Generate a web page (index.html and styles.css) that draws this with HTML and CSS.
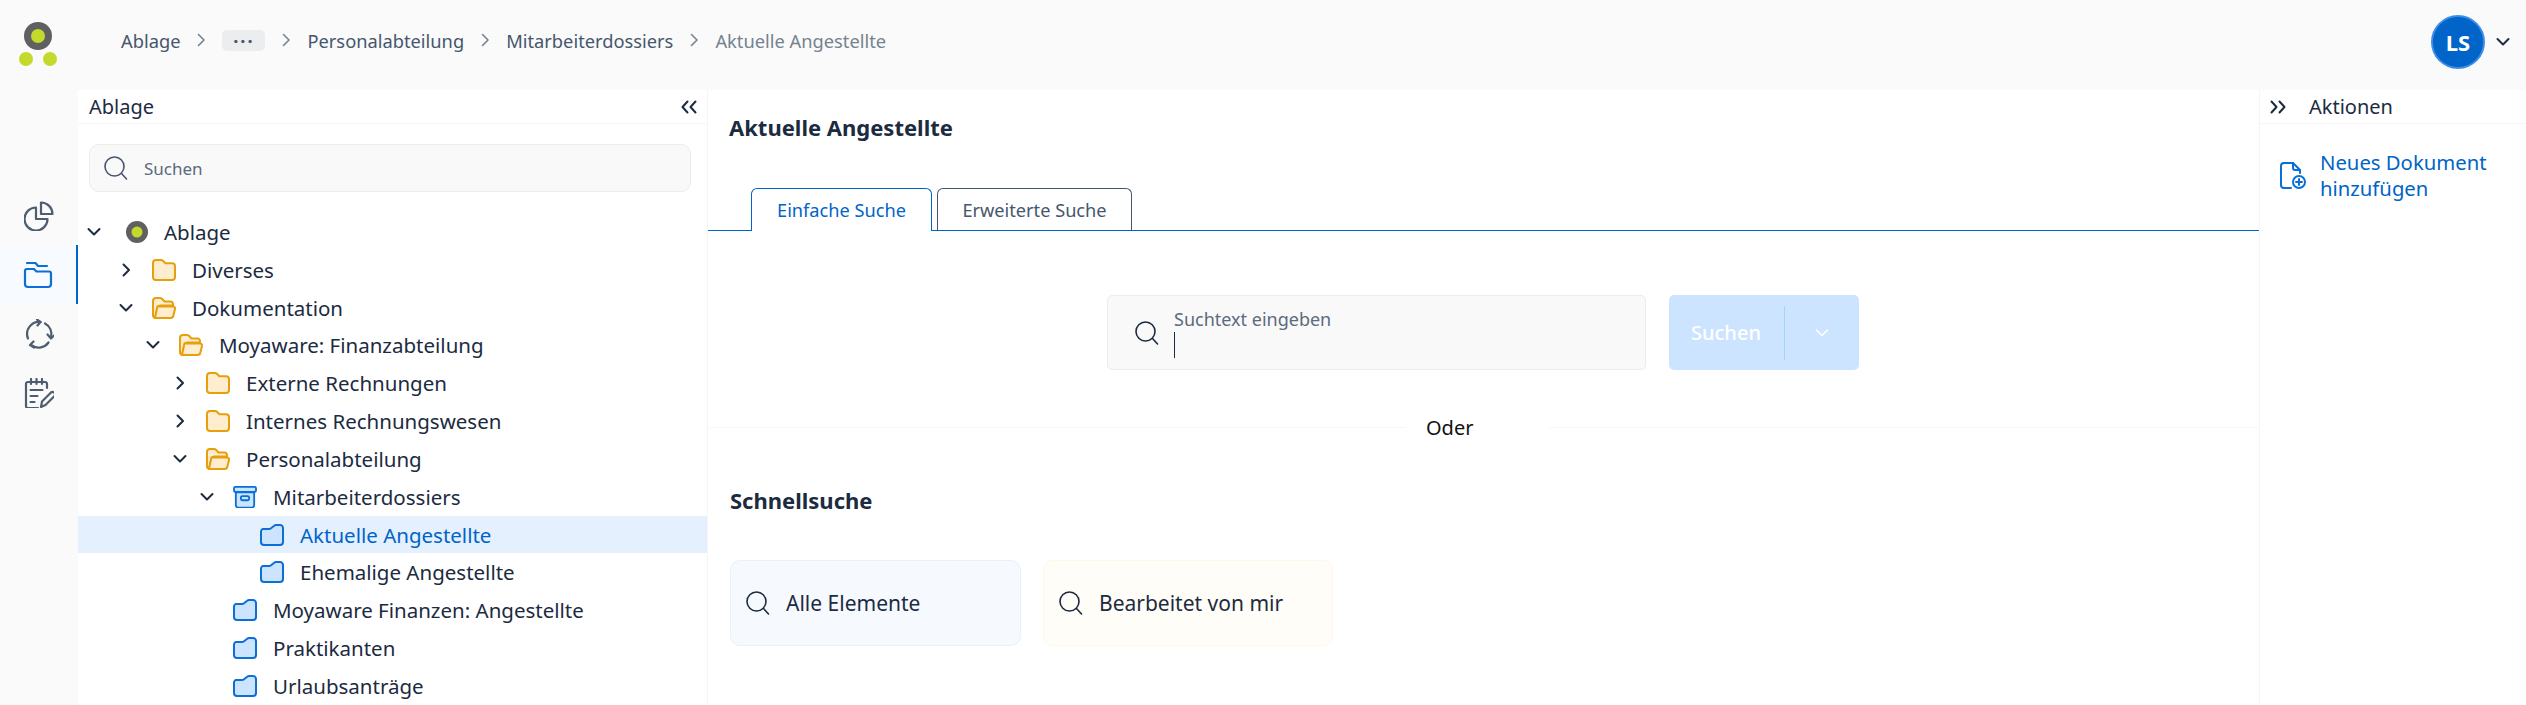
FILE: index.html
```html
<!DOCTYPE html>
<html lang="de">
<head>
<meta charset="utf-8">
<title>Aktuelle Angestellte</title>
<link rel="stylesheet" href="styles.css">
</head>
<body>
<svg class="defs" width="0" height="0" aria-hidden="true">
  <symbol id="search" viewBox="0 0 24 24"><circle cx="10.5" cy="10.5" r="9.5"/><path d="M17.5 17.5 22.5 23"/></symbol>
  <symbol id="chev-r" viewBox="0 0 16 16"><path d="M5.5 2.5 11 8l-5.500 5.500"/></symbol>
  <symbol id="chev-d" viewBox="0 0 16 16"><path d="M2.500 5 8 10.500 13.500 5"/></symbol>
  <symbol id="folder" viewBox="0 0 24 22"><path d="M1 4a3 3 0 0 1 3-3h5c1 0 1.600.4 2.200 1l2 2.200h6.800a3 3 0 0 1 3 3V18a3 3 0 0 1-3 3H4a3 3 0 0 1-3-3z"/></symbol>
  <symbol id="folder-open" viewBox="0 0 24 22"><path d="M1 4a3 3 0 0 1 3-3h4c1 0 1.600.4 2.200 1l2.300 2.500h6a2.500 2.500 0 0 1 2.500 2.500v1.500H8c-1.300 0-2.200.7-2.600 2L3 21H3.500A2.500 2.500 0 0 1 1 18.500z"/><path d="M5.400 9.500h15.600c1.500 0 2.400 1.200 2 2.600l-1.600 6.400A3 3 0 0 1 18.500 21H3z"/></symbol>
  <symbol id="folder-blue" viewBox="0 0 24 22"><path d="M1 7.500c0-1 .4-1.700 1.200-2.300L3 5h6c.8 0 1.400-.3 2-.8l3.200-2.500c.5-.4 1-.7 1.700-.7H20a3 3 0 0 1 3 3v14a3 3 0 0 1-3 3H4a3 3 0 0 1-3-3z"/></symbol>
  <symbol id="archive" viewBox="0 0 26 24"><path d="M3 7h20v14a2.500 2.500 0 0 1-2.500 2.500h-15A2.500 2.500 0 0 1 3 21z"/><rect x="1" y="1" width="24" height="5.500" rx="1.500"/><rect x="8.500" y="11" width="9" height="4.500" rx="1.500"/></symbol>
</svg>

<header class="topbar">
  <svg class="logo" width="60" height="70" viewBox="0 0 60 70" role="img" aria-label="Logo">
    <circle cx="30" cy="29" r="14" fill="#606062"/>
    <circle cx="30" cy="29" r="7" fill="#c3d92b"/>
    <circle cx="18" cy="52" r="7" fill="#c3d92b"/>
    <circle cx="42" cy="52" r="7" fill="#c3d92b"/>
  </svg>
  <nav class="crumbs">
    <a class="crumb">Ablage</a>
    <svg class="sep"><use href="#chev-r"/></svg>
    <span class="more">···</span>
    <svg class="sep"><use href="#chev-r"/></svg>
    <a class="crumb">Personalabteilung</a>
    <svg class="sep"><use href="#chev-r"/></svg>
    <a class="crumb">Mitarbeiterdossiers</a>
    <svg class="sep"><use href="#chev-r"/></svg>
    <span class="crumb current">Aktuelle Angestellte</span>
  </nav>
  <div class="user">
    <span class="avatar">LS</span>
    <svg class="user-chev"><use href="#chev-d"/></svg>
  </div>
</header>

<div class="body">
  <aside class="rail">
    <a class="rail-item">
      <svg width="30" height="30" viewBox="0 0 30 30"><path d="M12 6.500a11.500 11.500 0 1 0 11.500 11.500H12z"/><path d="M17 1.500a11.500 11.500 0 0 1 11.500 11.500H17z"/></svg>
    </a>
    <a class="rail-item active">
      <svg width="30" height="30" viewBox="0 0 30 30"><path d="M4 3h8.500l2.500 3h9"/><path d="M2 11a2 2 0 0 1 2-2h7l2.500 2.500h12.500a2 2 0 0 1 2 2V24a3 3 0 0 1-3 3H5a3 3 0 0 1-3-3z"/></svg>
    </a>
    <a class="rail-item">
      <svg width="30" height="30" viewBox="0 0 30 30"><path d="M4 19.500A12 12 0 0 1 16.500 3"/><path d="M13 .5l3.500 2.500-3 3.500"/><path d="M21 4.500a12 12 0 0 1 6 14"/><path d="M23.500 15.500l3.500 4 3-3"/><path d="M24.500 23.500A12 12 0 0 1 8 26.500"/><path d="M9.500 22.500 6 26l4 2.500"/></svg>
    </a>
    <a class="rail-item">
      <svg width="30" height="30" viewBox="0 0 30 30"><path d="M23 10V6a2 2 0 0 0-2-2H4a2 2 0 0 0-2 2v22a2 2 0 0 0 2 2h10"/><path d="M7 1v5M12.500 1v5M18 1v5M6.500 12h12M6.500 18h7M6.500 24h4"/><path d="M17 29l1-5.500 9-9a2.500 2.500 0 0 1 3.500 3.500l-9 9z"/></svg>
    </a>
  </aside>

  <section class="tree-panel">
    <div class="panel-head tree-head">
      <span>Ablage</span>
      <svg class="collapse" width="18" height="14" viewBox="0 0 18 14"><path d="M7.500 1.500 2.500 7l5 5.500M15.500 1.500l-5 5.500 5 5.500"/></svg>
    </div>
    <label class="tree-search">
      <svg class="ico-search gray"><use href="#search"/></svg>
      <span>Suchen</span>
    </label>
    <ul class="tree">
      <li class="row root"><svg class="chev"><use href="#chev-d"/></svg>
        <svg class="root-ico" width="22" height="22" viewBox="0 0 22 22"><circle cx="11" cy="11" r="11" fill="#606062"/><circle cx="11" cy="11" r="5.500" fill="#c3d92b"/></svg>
        <span>Ablage</span></li>
      <li class="row l1"><svg class="chev"><use href="#chev-r"/></svg><svg class="ico orange"><use href="#folder"/></svg><span>Diverses</span></li>
      <li class="row l1"><svg class="chev"><use href="#chev-d"/></svg><svg class="ico orange"><use href="#folder-open"/></svg><span>Dokumentation</span></li>
      <li class="row l2"><svg class="chev"><use href="#chev-d"/></svg><svg class="ico orange"><use href="#folder-open"/></svg><span>Moyaware: Finanzabteilung</span></li>
      <li class="row l3"><svg class="chev"><use href="#chev-r"/></svg><svg class="ico orange"><use href="#folder"/></svg><span>Externe Rechnungen</span></li>
      <li class="row l3"><svg class="chev"><use href="#chev-r"/></svg><svg class="ico orange"><use href="#folder"/></svg><span>Internes Rechnungswesen</span></li>
      <li class="row l3"><svg class="chev"><use href="#chev-d"/></svg><svg class="ico orange"><use href="#folder-open"/></svg><span>Personalabteilung</span></li>
      <li class="row l4"><svg class="chev"><use href="#chev-d"/></svg><svg class="ico blue"><use href="#archive"/></svg><span>Mitarbeiterdossiers</span></li>
      <li class="row l5 selected"><span class="chev"></span><svg class="ico blue"><use href="#folder-blue"/></svg><span>Aktuelle Angestellte</span></li>
      <li class="row l5"><span class="chev"></span><svg class="ico blue"><use href="#folder-blue"/></svg><span>Ehemalige Angestellte</span></li>
      <li class="row l4"><span class="chev"></span><svg class="ico blue"><use href="#folder-blue"/></svg><span>Moyaware Finanzen: Angestellte</span></li>
      <li class="row l4"><span class="chev"></span><svg class="ico blue"><use href="#folder-blue"/></svg><span>Praktikanten</span></li>
      <li class="row l4"><span class="chev"></span><svg class="ico blue"><use href="#folder-blue"/></svg><span>Urlaubsanträge</span></li>
    </ul>
  </section>

  <main class="main">
    <h1 class="title">Aktuelle Angestellte</h1>
    <div class="tabs">
      <a class="tab active">Einfache Suche</a>
      <a class="tab">Erweiterte Suche</a>
    </div>
    <div class="search-row">
      <div class="search-box">
        <svg class="ico-search dark"><use href="#search"/></svg>
        <div class="search-field">
          <span class="search-label">Suchtext eingeben</span>
          <span class="caret"></span>
        </div>
      </div>
      <div class="search-btn">
        <span class="btn-label">Suchen</span>
        <span class="btn-div"></span>
        <svg class="btn-chev"><use href="#chev-d"/></svg>
      </div>
    </div>
    <div class="or"><span>Oder</span></div>
    <h2 class="subtitle">Schnellsuche</h2>
    <div class="cards">
      <a class="card card-blue"><svg class="ico-search dark"><use href="#search"/></svg><span>Alle Elemente</span></a>
      <a class="card card-yellow"><svg class="ico-search dark"><use href="#search"/></svg><span>Bearbeitet von mir</span></a>
    </div>
  </main>

  <aside class="actions">
    <div class="panel-head actions-head">
      <svg class="collapse" width="18" height="14" viewBox="0 0 18 14"><path d="M2.500 1.500l5 5.500-5 5.500M10.500 1.500l5 5.500-5 5.500"/></svg>
      <span>Aktionen</span>
    </div>
    <a class="action">
      <svg width="26" height="28" viewBox="0 0 26 28"><path d="M11 26H4a3 3 0 0 1-3-3V4a3 3 0 0 1 3-3h9l7 7v3"/><path d="M13 1v5a2 2 0 0 0 2 2h5"/><circle cx="19" cy="20" r="6"/><path d="M19 17v6M16 20h6"/></svg>
      <span>Neues Dokument hinzufügen</span>
    </a>
  </aside>
</div>
</body>
</html>
```
FILE: styles.css
```css
* { box-sizing: border-box; }
html, body { margin: 0; padding: 0; height: 100%; overflow: hidden; }
body {
  font-family: "Noto Sans", "Open Sans", sans-serif;
  font-size: 18px;
  color: #1c2b3f;
  background: #fff;
  display: flex;
  flex-direction: column;
}
.defs { position: absolute; }
symbol { overflow: visible; }
svg { fill: none; stroke-linecap: round; stroke-linejoin: round; flex: none; }
ul { list-style: none; margin: 0; padding: 0; }
h1, h2 { margin: 0; }

.topbar {
  height: 90px;
  flex: none;
  display: flex;
  align-items: flex-start;
  background: #fafafa;
  padding-left: 8px;
}
.logo { margin-top: 7px; }
.crumbs {
  display: flex;
  align-items: center;
  height: 80px;
  margin-left: 53px;
  font-size: 18.3px;
  color: #46566c;
}
.crumb { white-space: nowrap; }
.current { color: #75828f; }
.sep { width: 16px; height: 16px; stroke: #75828f; stroke-width: 1.6; margin: 0 13px; }
.more {
  width: 43px;
  height: 21px;
  border-radius: 5px;
  background: #ecedef;
  display: flex;
  align-items: center;
  justify-content: center;
  letter-spacing: 2px;
  font-weight: 700;
}
.user { margin-left: auto; display: flex; align-items: center; height: 84px; padding-right: 15px; }
.avatar {
  width: 54px;
  height: 54px;
  border-radius: 50%;
  background: #0064c8;
  border: 2px solid #3c8fe6;
  color: #fff;
  font-weight: 700;
  font-size: 22px;
  display: flex;
  align-items: center;
  justify-content: center;
}
.user-chev { width: 16px; height: 16px; stroke: #1c2b3f; stroke-width: 2; margin-left: 10px; }

.body { flex: 1; display: flex; min-height: 0; }

.rail {
  width: 78px;
  flex: none;
  background: #fafafa;
  padding-top: 96px;
  display: flex;
  flex-direction: column;
}
.rail-item {
  height: 59px;
  display: flex;
  align-items: center;
  justify-content: center;
  padding-right: 1px;
}
.rail-item svg { stroke: #4e5d70; stroke-width: 2.2; }
.rail-item.active { background: #f7fafe; border-right: 2px solid #0064c8; }
.rail-item.active svg { stroke: #0a6fd6; }

.panel-head {
  height: 34px;
  display: flex;
  align-items: center;
  border-bottom: 1px solid #f5f5f5;
  font-size: 20px;
}
.collapse { stroke: #1c2b3f; stroke-width: 2; }

.tree-panel {
  width: 630px;
  flex: none;
  border-right: 1px solid #f5f5f5;
  overflow: hidden;
}
.tree-head { justify-content: space-between; padding: 0 9px 0 11px; }
.tree-search {
  display: flex;
  align-items: center;
  gap: 16px;
  height: 48px;
  margin: 20px 16px 0 11px;
  padding: 0 14px;
  background: #f9f9f9;
  border: 1px solid #ececec;
  border-radius: 10px;
  font-size: 17px;
  color: #5b6a7c;
}
.ico-search { width: 24px; height: 24px; stroke-width: 1.6; }
.ico-search.gray { stroke: #46566c; }
.ico-search.dark { stroke: #1c2b3f; }

.tree { margin-top: 21px; font-size: 20.5px; }
.row { height: 37.83px; display: flex; align-items: center; white-space: nowrap; }
.chev { width: 16px; height: 16px; stroke: #1c2b3f; stroke-width: 2; margin-right: 18px; flex: none; }
.ico { width: 24px; height: 22px; margin-right: 16px; stroke-width: 2; }
.orange { stroke: #e89f0c; fill: #feedcf; }
.blue { stroke: #0a6fd6; fill: #cce4ff; }
.root { padding-left: 8px; }
.root .chev { margin-right: 24px; }
.root-ico { margin-right: 16px; }
.l1 { padding-left: 40px; }
.l2 { padding-left: 67px; }
.l3 { padding-left: 94px; }
.l4 { padding-left: 121px; }
.l5 { padding-left: 148px; }
.selected { background: #e4f0fd; color: #0064c8; }

.main { flex: 1; min-width: 0; }
.title { font-size: 22px; font-weight: 700; line-height: 28px; padding: 23px 0 0 21px; }
.tabs {
  display: flex;
  gap: 5px;
  height: 43px;
  margin-top: 47px;
  padding-left: 43px;
  border-bottom: 1px solid #0064c8;
  font-size: 18.2px;
}
.tab {
  height: 42px;
  display: flex;
  align-items: center;
  justify-content: center;
  border: 1px solid #46566c;
  border-bottom: 0;
  border-radius: 6px 6px 0 0;
  width: 195px;
  color: #46566c;
}
.tab.active {
  width: 181px;
  height: 43px;
  padding-bottom: 1px;
  border-color: #0064c8;
  background: #fff;
  color: #0064c8;
}
.search-row { display: flex; gap: 23px; margin: 64px 0 0 399px; height: 75px; }
.search-box {
  width: 539px;
  display: flex;
  align-items: center;
  gap: 15px;
  padding: 0 0 0 27px;
  background: #f9f9f9;
  border: 1px solid #ececec;
  border-radius: 5px;
}
.search-field { display: flex; flex-direction: column; gap: 2px; }
.search-label { font-size: 18px; color: #5b6a7c; line-height: 22px; }
.caret { width: 1px; height: 26px; background: #1c2b3f; }
.search-btn {
  width: 190px;
  display: flex;
  align-items: center;
  background: #cce4ff;
  border-radius: 5px;
  color: #fff;
  padding-left: 22px;
  font-size: 20px;
}
.btn-label { width: 93px; font-weight: 500; }
.btn-div { width: 1px; height: 54px; background: #a9d2fb; }
.btn-chev { width: 16px; height: 16px; stroke: #fff; stroke-width: 1.6; margin-left: 29px; }
.or {
  display: flex;
  margin-top: 42px;
  height: 30px;
  align-items: center;
  font-size: 20px;
  background: linear-gradient(#f8f8f8, #f8f8f8) center / 100% 1px no-repeat;
}
.or span { background: #fff; padding: 0 75px 0 20px; margin-left: 698px; color: #111; }
.subtitle { font-size: 22px; font-weight: 700; line-height: 26px; margin: 45px 0 0 22px; }
.cards { display: flex; gap: 22px; margin: 47px 0 0 22px; }
.card {
  height: 86px;
  display: flex;
  align-items: center;
  gap: 16px;
  padding-left: 15px;
  border-radius: 10px;
  font-size: 21px;
}
.card-blue { width: 291px; background: #f6faff; border: 1px solid #e6f1fd; }
.card-yellow { width: 290px; background: #fffdf7; border: 1px solid #fff6e6; }

.actions { width: 267px; flex: none; border-left: 1px solid #f5f5f5; }
.actions-head { gap: 22px; padding-left: 9px; }
.action {
  display: flex;
  align-items: flex-start;
  gap: 15px;
  padding: 26px 0 0 20px;
  color: #0064c8;
  font-size: 20.3px;
  line-height: 26px;
}
.action span { width: 200px; margin-top: -1px; margin-left: -1px; }
.action svg { stroke: #0a6fd6; stroke-width: 2; margin-top: 12px; }
```
